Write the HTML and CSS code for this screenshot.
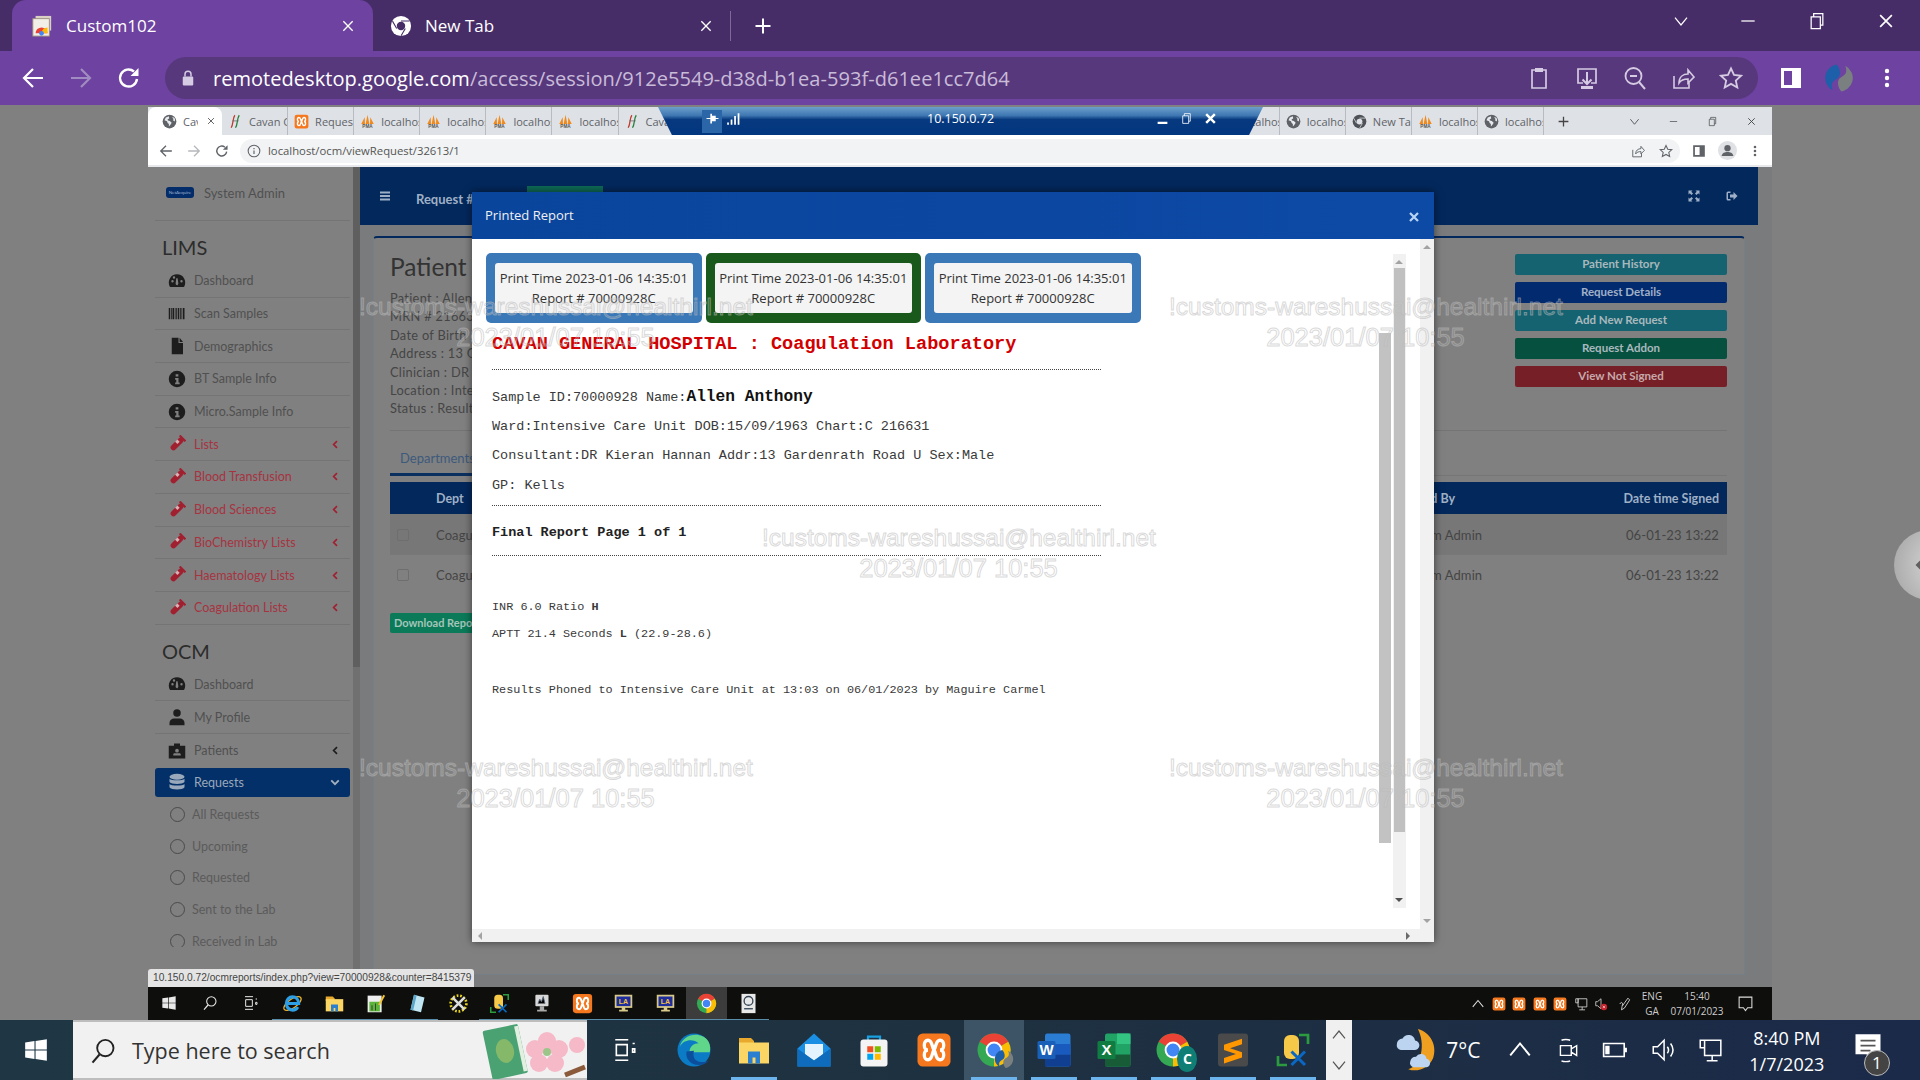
FILE: index.html
```html
<!DOCTYPE html>
<html lang="en">
<head>
    <meta charset="UTF-8">
    <title>Custom102 - Printed Report</title>
    <link rel="stylesheet" href="styles.css">
</head>
<body>
<svg class="defs" width="0" height="0">
    <symbol id="i-win" viewBox="0 0 24 24"><path fill="currentColor" d="M2 5l8.6-1.2v7.7H2zM11.6 3.7L22 2v9.5H11.6zM2 12.5h8.6v7.7L2 19zM11.6 12.5H22V22l-10.4-1.6z"/></symbol>
    <symbol id="i-search" viewBox="0 0 24 24"><circle cx="14" cy="9.5" r="7" fill="none" stroke="currentColor" stroke-width="1.6"/><path d="M9 15L3 22" stroke="currentColor" stroke-width="1.8"/></symbol>
    <symbol id="i-taskview" viewBox="0 0 24 24"><path fill="none" stroke="currentColor" stroke-width="1.5" d="M3 2.5h12M3 21.5h12M4 7h10v10H4zM19 6h2M19 11h2v3h-2z"/></symbol>
    <symbol id="i-chrome" viewBox="0 0 24 24"><circle cx="12" cy="12" r="11" fill="#34a853"/><path fill="#ea4335" d="M12 12L2.47 6.5A11 11 0 0 1 21.53 6.5z"/><path fill="#fbbc05" d="M12 12L21.53 6.5A11 11 0 0 1 12 23z"/><circle cx="12" cy="12" r="5.6" fill="#fff"/><circle cx="12" cy="12" r="4.3" fill="#4285f4"/></symbol>
    <symbol id="i-chrome-mono" viewBox="0 0 24 24"><circle cx="12" cy="12" r="11" fill="currentColor"/><circle cx="12" cy="12" r="4.6" fill="var(--hole)"/><path fill="none" stroke="var(--hole)" stroke-width="1.2" d="M12 6.6h9.3M7.3 14.7L2.7 6.7M16.7 14.7l-4.6 8"/></symbol>
    <symbol id="i-globe" viewBox="0 0 24 24"><circle cx="12" cy="12" r="11" fill="#5f6368"/><path fill="#e8eaed" d="M11 3.5l-5 2.2L4 10l4 1.5 1 3 2 1.5V20l2.5-3 2-3-3-3-3-.5-.5-2 2.5-1.2zM16 5l2.5 3-1 2 3 2 .5-4-2-2.5z"/></symbol>
    <symbol id="i-pma" viewBox="0 0 24 24"><path fill="#f08a1d" d="M12 1l3 15H9zM7.5 5L8 16H2zM16.5 5L22 16h-6z"/><text x="12" y="23" font-size="7.5" font-weight="700" text-anchor="middle" font-family="Liberation Sans" fill="#555">PMA</text></symbol>
    <symbol id="i-cavan" viewBox="0 0 24 24"><path fill="none" stroke="#c03a2b" stroke-width="2" d="M11 2C7 7 9 16 5 22"/><path fill="none" stroke="#23803a" stroke-width="2" d="M18 2c-4 5-2 14-6 20"/><path fill="none" stroke="#666" stroke-width="1.2" d="M7 11h10"/></symbol>
    <symbol id="i-xampp" viewBox="0 0 24 24"><rect x="1" y="1" width="22" height="22" rx="3.5" fill="#f5781e"/><path fill="none" stroke="#fff" stroke-width="2.2" d="M8 5.5c3 0 2.500 4.500 4 6.500 1.500-2 1-6.500 4-6.500 3.300 0 3.300 6.500 0 6.500 3.300 0 3.300 6.500 0 6.500-3 0-2.500-4.500-4-6.500-1.500 2-1 6.500-4 6.500-3.300 0-3.300-6.500 0-6.500-3.300 0-3.300-6.500 0-6.500z"/></symbol>
    <symbol id="i-folder" viewBox="0 0 24 24"><path fill="#e8a92c" d="M2 4h8l2 2v3H2z"/><path fill="#fbd665" d="M2 7h20v14H2z"/><path fill="#2a7fd0" d="M8 13h8v8h-3v-4h-2v4H8z"/></symbol>
    <symbol id="i-edge" viewBox="0 0 24 24"><circle cx="12" cy="12" r="11" fill="#0c7bc5"/><path fill="#5fd68a" d="M2.500 10C4 3 12 0 18 3c4 2 5.500 6 4.500 10.500H9c0-4 3-6 6-6 -3-3-10-3-12.500 2.500z"/><path fill="#0b4f9c" d="M7 13c-1 5 3 9 8 9 3 0 5-1 7-3-4 2-9 1-10-2-.5-1.500-.5-3 0-4.500z"/></symbol>
    <symbol id="i-mail" viewBox="0 0 24 24"><path fill="#1a8fe3" d="M12 1L23 11v12H1V11z"/><path fill="#e4f3fd" d="M6 8h12v7l-6 4-6-4z"/><path fill="#0f6cbd" d="M1 11l11 8 11-8v12H1z"/></symbol>
    <symbol id="i-store" viewBox="0 0 24 24"><path fill="none" stroke="#18a0e0" stroke-width="1.500" d="M8 6V3h8v3"/><rect x="3" y="5" width="18" height="18" rx="2" fill="#f4f4f4"/><rect x="7.500" y="9.500" width="4" height="4" fill="#f25022"/><rect x="12.500" y="9.500" width="4" height="4" fill="#7fba00"/><rect x="7.500" y="14.500" width="4" height="4" fill="#00a4ef"/><rect x="12.500" y="14.500" width="4" height="4" fill="#ffb900"/></symbol>
    <symbol id="i-word" viewBox="0 0 24 24"><rect x="6" y="1" width="17" height="22" rx="1.500" fill="#2b7cd3"/><rect x="6" y="8" width="17" height="7" fill="#185abd"/><rect x="6" y="15" width="17" height="8" fill="#103f91"/><rect x="1" y="6" width="12" height="12" rx="1" fill="#1a5fb8"/><text x="7" y="15.500" font-size="10" font-weight="700" text-anchor="middle" font-family="Liberation Sans" fill="#fff">W</text></symbol>
    <symbol id="i-excel" viewBox="0 0 24 24"><rect x="6" y="1" width="17" height="22" rx="1.500" fill="#21a366"/><rect x="14" y="1" width="9" height="7" fill="#33c481"/><rect x="6" y="15" width="17" height="8" fill="#185c37"/><rect x="1" y="6" width="12" height="12" rx="1" fill="#107c41"/><text x="7" y="15.500" font-size="10" font-weight="700" text-anchor="middle" font-family="Liberation Sans" fill="#fff">X</text></symbol>
    <symbol id="i-sublime" viewBox="0 0 24 24"><rect x="2" y="1" width="20" height="22" rx="2" fill="#4a4a4a"/><path fill="#ff9800" d="M6 8.500l12-4v3.700l-8 2.600 8 2.700v3.500l-12 4v-3.700l8-2.600-8-2.700z"/></symbol>
    <symbol id="i-tools" viewBox="0 0 24 24"><rect x="6" y="2" width="10" height="16" rx="4" fill="#f7c948"/><path fill="none" stroke="#2c9a3e" stroke-width="1.800" d="M2 16v6h6M22 8V2h-6"/><path fill="none" stroke="#0a68c4" stroke-width="2" d="M11 22l9-9M20 22l-9-9"/></symbol>
    <symbol id="i-notepad" viewBox="0 0 24 24"><rect x="3" y="3" width="16" height="19" fill="#eee"/><path fill="#5bb53a" d="M5 10h12v11H5z"/><path fill="#f4c430" d="M15 13l6-11 2 1-6 11z"/><path stroke="#333" d="M8 20v-6M12 20v-8"/></symbol>
    <symbol id="i-sheet" viewBox="0 0 24 24"><path fill="#bfe6f2" d="M8 2l12 3-4 17-12-3z"/><path fill="#5aa5c9" d="M4 19l4-17 3 .8L7 20z"/></symbol>
    <symbol id="i-wrench" viewBox="0 0 24 24"><circle cx="12" cy="12" r="9" fill="none" stroke="#e6d21f" stroke-width="3" stroke-dasharray="2 2"/><path stroke="#ddd" stroke-width="3" d="M5 5l14 14M19 5L5 19"/></symbol>
    <symbol id="i-mon" viewBox="0 0 24 24"><rect x="3" y="3" width="18" height="13" fill="#1d2d9b" stroke="#d8c98a" stroke-width="2"/><path fill="#d8c98a" d="M10 16h4v3h3v2H7v-2h3z"/><text x="12" y="13" font-size="8" font-weight="700" text-anchor="middle" font-family="Liberation Sans" fill="#f0c040">LA</text></symbol>
    <symbol id="i-scope" viewBox="0 0 24 24"><rect x="4" y="1" width="16" height="22" fill="#e8e8e8"/><circle cx="12" cy="9" r="5" fill="none" stroke="#345" stroke-width="1.500"/><path stroke="#345" stroke-width="1.500" d="M7 18h10"/></symbol>
    <symbol id="i-pc" viewBox="0 0 24 24"><rect x="5" y="2" width="15" height="13" rx="1" fill="#d8d8d8"/><path stroke="#567" d="M8 12l2-5 2 3 2-6 2 8"/><path fill="#aaa" d="M10 15h5v4h3v2H7v-2h3z"/></symbol>
    <symbol id="i-monitor" viewBox="0 0 24 24"><path fill="none" stroke="currentColor" stroke-width="1.400" d="M7 3h15v14H7zM3 3h4v7H3zM14 17v5M9 22h10"/></symbol>
    <symbol id="i-speaker" viewBox="0 0 24 24"><path fill="none" stroke="currentColor" stroke-width="1.400" d="M3 9h4l6-6v18l-6-6H3zM16 9c1.500 2 1.500 4 0 6M19 6c3 4 3 8 0 12"/></symbol>
    <symbol id="i-battery" viewBox="0 0 24 24"><path fill="none" stroke="currentColor" stroke-width="1.500" d="M1.500 6h19v12h-19z"/><path fill="currentColor" d="M3 8h4v8H3zM21 10h2v4h-2z"/></symbol>
    <symbol id="i-cam" viewBox="0 0 24 24"><path fill="none" stroke="currentColor" stroke-width="1.300" d="M5 8h10v9H5zM15 11l5-3v9l-5-3M6 3c2-1 6-1 8 0M6 22c2 1 6 1 8 0"/></symbol>
    <symbol id="i-chat" viewBox="0 0 24 24"><path fill="none" stroke="currentColor" stroke-width="1.500" d="M3 3h18v15h-6l-3 4-3-4H3z"/></symbol>
    <symbol id="i-caret-up" viewBox="0 0 24 24"><path fill="none" stroke="currentColor" stroke-width="1.800" d="M3 17l9-11 9 11"/></symbol>
    <symbol id="i-caret-down" viewBox="0 0 24 24"><path fill="none" stroke="currentColor" stroke-width="1.800" d="M3 7l9 11 9-11"/></symbol>
    <symbol id="i-close" viewBox="0 0 24 24"><path fill="none" stroke="currentColor" stroke-width="2" d="M5 5l14 14M19 5L5 19"/></symbol>
    <symbol id="i-close-bold" viewBox="0 0 24 24"><path fill="none" stroke="currentColor" stroke-width="4.500" d="M4 4l16 16M20 4L4 20"/></symbol>
    <symbol id="i-min" viewBox="0 0 24 24"><path stroke="currentColor" stroke-width="1.500" d="M4 12h16"/></symbol>
    <symbol id="i-min-bold" viewBox="0 0 24 24"><path stroke="currentColor" stroke-width="4" d="M3 20h18"/></symbol>
    <symbol id="i-restore" viewBox="0 0 24 24"><path fill="none" stroke="currentColor" stroke-width="1.500" d="M5 7h11v14H5zM8 7V3h11v14h-3"/></symbol>
    <symbol id="i-plus" viewBox="0 0 24 24"><path stroke="currentColor" stroke-width="2.400" d="M12 3v18M3 12h18"/></symbol>
    <symbol id="i-back" viewBox="0 0 24 24"><path fill="none" stroke="currentColor" stroke-width="2.200" d="M22 12H4M12 3l-9 9 9 9"/></symbol>
    <symbol id="i-forward" viewBox="0 0 24 24"><path fill="none" stroke="currentColor" stroke-width="2.200" d="M2 12h18M12 3l9 9-9 9"/></symbol>
    <symbol id="i-reload" viewBox="0 0 24 24"><path fill="none" stroke="currentColor" stroke-width="2.400" d="M20 13a8.500 8.500 0 1 1-3-7.500"/><path fill="currentColor" d="M21.500 2v8h-8z"/></symbol>
    <symbol id="i-lock" viewBox="0 0 24 24"><path fill="none" stroke="currentColor" stroke-width="2" d="M8 10V7a4 4 0 0 1 8 0v3"/><rect x="5" y="10" width="14" height="12" rx="1.500" fill="currentColor"/></symbol>
    <symbol id="i-info" viewBox="0 0 24 24"><circle cx="12" cy="12" r="10" fill="none" stroke="currentColor" stroke-width="1.800"/><path stroke="currentColor" stroke-width="2" d="M12 11v6M12 7v2"/></symbol>
    <symbol id="i-clip" viewBox="0 0 24 24"><path fill="none" stroke="currentColor" stroke-width="1.700" d="M5 4h14v18H5z"/><rect x="8" y="2" width="8" height="4" fill="currentColor"/></symbol>
    <symbol id="i-install" viewBox="0 0 24 24"><path fill="none" stroke="currentColor" stroke-width="1.700" d="M8 17H3V3h18v14h-5"/><path fill="none" stroke="currentColor" stroke-width="2" d="M12 6v12M7.500 13.500L12 18l4.500-4.500"/><rect x="6" y="20" width="12" height="3" fill="currentColor"/></symbol>
    <symbol id="i-zoomout" viewBox="0 0 24 24"><circle cx="10.500" cy="10" r="8" fill="none" stroke="currentColor" stroke-width="1.800"/><path stroke="currentColor" stroke-width="2" d="M7 10h7M16 16l6 7"/></symbol>
    <symbol id="i-share" viewBox="0 0 24 24"><path fill="none" stroke="currentColor" stroke-width="1.600" d="M3 10v12h15v-6M8 17c0-6 4-9 9-9V4l6 7-6 6v-4c-4 0-7 1-9 4z"/></symbol>
    <symbol id="i-star" viewBox="0 0 24 24"><path fill="none" stroke="currentColor" stroke-width="1.800" d="M12 2.500l3 6.500 7 .8-5.200 4.700 1.500 7L12 17.900 5.700 21.500l1.500-7L2 9.800 9 9z"/></symbol>
    <symbol id="i-panel" viewBox="0 0 24 24"><path fill="currentColor" fill-rule="evenodd" d="M2 2h20v20H2zM5 5v14h8V5z"/></symbol>
    <symbol id="i-menu" viewBox="0 0 24 24"><circle cx="12" cy="5" r="2.200" fill="currentColor"/><circle cx="12" cy="12" r="2.200" fill="currentColor"/><circle cx="12" cy="19" r="2.200" fill="currentColor"/></symbol>
    <symbol id="i-profile" viewBox="0 0 24 24"><circle cx="12" cy="12" r="12" fill="#dfe1e5"/><circle cx="12" cy="9" r="4" fill="#5f6368"/><path fill="#5f6368" d="M4.500 19c1-4 4-5 7.500-5s6.500 1 7.500 5z"/></symbol>
    <symbol id="i-swirl" viewBox="0 0 24 24"><path fill="#1d5fa8" d="M12 1a11 11 0 0 0-5 20.800C4 14 10 14 12 11c2-3 0-8-2-9.800z"/><path fill="#7a8080" d="M12 23a11 11 0 0 0 5-20.800c3 7.800-3 7.800-5 10.800-2 3 0 8 2 9.800z"/></symbol>
    <symbol id="i-gauge" viewBox="0 0 24 24"><path fill="currentColor" fill-rule="evenodd" d="M12 3a11 11 0 0 0-9.500 16.500c.3.500.8.500 1.200.500h16.600c.4 0 .9 0 1.200-.500A11 11 0 0 0 12 3zM6 14a1.600 1.600 0 1 1 0-3.200A1.600 1.600 0 0 1 6 14zM8 9a1.600 1.600 0 1 1 0-3.200A1.600 1.600 0 0 1 8 9zm4.800 8.500a2 2 0 0 1-2.600-2.200l.8-7h1.800l1 7zM18 14a1.600 1.600 0 1 1 0-3.200A1.600 1.600 0 0 1 18 14z"/></symbol>
    <symbol id="i-barcode" viewBox="0 0 24 24"><path fill="currentColor" d="M1 4h2v15H1zM4 4h1v15H4zM6 4h2v15H6zM9 4h1v15H9zM11 4h1v15h-1zM13 4h2v15h-2zM16 4h1v15h-1zM18 4h1v15h-1zM20 4h2v15h-2z"/></symbol>
    <symbol id="i-file" viewBox="0 0 24 24"><path fill="currentColor" d="M5 1h9v7h6v15H5zM15.500 1L20 6.500h-4.500z"/></symbol>
    <symbol id="i-infofill" viewBox="0 0 24 24"><path fill="currentColor" fill-rule="evenodd" d="M12 1a11 11 0 1 0 0 22 11 11 0 0 0 0-22zm-1.800 4.500h3.600v3h-3.600zM9.500 10.500H14v6h1.500v2.500h-6v-2.500H11V13H9.500z"/></symbol>
    <symbol id="i-vial" viewBox="0 0 24 24"><g transform="rotate(45 12 12)" fill="currentColor"><rect x="8.200" y="1.500" width="7.600" height="21" rx="3.800"/><rect x="6.500" y="0" width="11" height="3" rx="1"/></g><path fill="#e8e2e2" opacity=".75" d="M12.500 6l3 3-3 3-3-3z"/></symbol>
    <symbol id="i-user" viewBox="0 0 24 24"><circle cx="12" cy="6.500" r="5" fill="currentColor"/><path fill="currentColor" d="M2 23v-3c0-4 3-6 6-6h8c3 0 6 2 6 6v3z"/></symbol>
    <symbol id="i-badge" viewBox="0 0 24 24"><path fill="currentColor" fill-rule="evenodd" d="M1 5h7V2h8v3h7v17H1zM12 9a2.500 2.500 0 1 0 0 5 2.500 2.500 0 0 0 0-5zM7 18h10v-1.500c0-1-1-1.500-2-1.500H9c-1 0-2 .5-2 1.500z"/></symbol>
    <symbol id="i-db" viewBox="0 0 24 24"><ellipse cx="12" cy="5" rx="10" ry="4" fill="currentColor"/><path fill="currentColor" d="M2 7.500c2 3 18 3 20 0V12c-2 3.500-18 3.500-20 0zM2 14.500c2 3 18 3 20 0V19c-2 4-18 4-20 0z"/></symbol>
    <symbol id="i-chev-left" viewBox="0 0 24 24"><path fill="none" stroke="currentColor" stroke-width="4.500" d="M16 3l-9 9 9 9"/></symbol>
    <symbol id="i-chev-down" viewBox="0 0 24 24"><path fill="none" stroke="currentColor" stroke-width="4.500" d="M3 8l9 9 9-9"/></symbol>
    <symbol id="i-bars" viewBox="0 0 24 24"><path fill="currentColor" d="M2 3h20v4H2zM2 10h20v4H2zM2 17h20v4H2z"/></symbol>
    <symbol id="i-expand" viewBox="0 0 24 24"><path fill="currentColor" d="M1 1h8L6.500 3.500 10 7l-3 3-3.500-3.500L1 9zM23 1v8l-2.500-2.500L17 10l-3-3 3.500-3.500L15 1zM1 23v-8l2.500 2.500L7 14l3 3-3.500 3.500L9 23zM23 23h-8l2.500-2.500L14 17l3-3 3.500 3.500L23 15z"/></symbol>
    <symbol id="i-signout" viewBox="0 0 24 24"><path fill="currentColor" d="M9 3H4a3 3 0 0 0-3 3v12a3 3 0 0 0 3 3h5v-3H4V6h5zM15 4l8 8-8 8v-5H8V9h7z"/></symbol>
    <symbol id="i-pin" viewBox="0 0 24 24"><path fill="currentColor" d="M8 3h3v18H8zM11 7h7v10h-7zM1 11h7v2H1zM18 11h5v2h-5z"/></symbol>
    <symbol id="i-signal" viewBox="0 0 24 24"><path fill="currentColor" d="M2 18h3v4H2zM8 13h3v9H8zM14 7h3v15h-3zM20 2h3v20h-3z"/></symbol>
    <symbol id="i-tab-stack" viewBox="0 0 24 24"><rect x="5" y="1" width="17" height="16" fill="#d8d0c4"/><rect x="2" y="4" width="18" height="19" fill="#f2efe9" stroke="#9a8d7c"/><path fill="#ea4335" d="M5 20a6.500 6.500 0 0 1 13 0z"/><path fill="#fbbc05" d="M11.500 20a6.500 6.500 0 0 1 6.500-6.500V20z"/><circle cx="11.500" cy="20" r="2.500" fill="#4285f4"/></symbol>
    <symbol id="i-moon" viewBox="0 0 24 24"><path fill="#f0a020" d="M13 1c7 2 10 9 8 15-2 5-8 8-13 6 7-2 9-13 5-21z"/><path fill="#bcd4ef" d="M2 9a3 3 0 0 1 3-3 3.500 3.500 0 0 1 6.500 1A2.500 2.500 0 0 1 11 12H4a2.500 2.500 0 0 1-2-3zM9 18a3 3 0 0 1 3-2.500 3 3 0 0 1 5.500 1 2.300 2.300 0 0 1 0 4.500H11a2.200 2.200 0 0 1-2-3z"/></symbol>
    <symbol id="i-pen" viewBox="0 0 24 24"><path fill="none" stroke="currentColor" stroke-width="1.500" d="M17 2l3 3-9 14-5 3 1-6zM3 12c4-6 6 0 4 3"/></symbol>
    <symbol id="i-mute" viewBox="0 0 24 24"><path fill="none" stroke="#ccc" stroke-width="1.500" d="M3 8h3l6-5v17l-6-5H3z"/><circle cx="17" cy="17" r="5.500" fill="#c8232c"/><path stroke="#fff" d="M15 15l4 4M19 15l-4 4"/></symbol>
    <symbol id="i-ie" viewBox="0 0 24 24"><ellipse cx="12" cy="12" rx="11.500" ry="5" fill="none" stroke="#e8b22c" stroke-width="1.500" transform="rotate(-35 12 12)"/><path fill="none" stroke="#2d9fe6" stroke-width="3.600" d="M5.500 12h13.500c0-4.500-3-7.500-7-7.500s-7 3.500-7 7.500 3 7.500 7 7.500c3 0 5-1.500 6-3.500"/></symbol>
</svg>

<header class="tab-strip">
    <div class="tab active">
        <svg class="fav"><use href="#i-tab-stack"/></svg>
        <span>Custom102</span>
        <svg class="tab-x"><use href="#i-close"/></svg>
    </div>
    <div class="tab second">
        <svg class="fav"><use href="#i-chrome-mono"/></svg>
        <span>New Tab</span>
        <svg class="tab-x"><use href="#i-close"/></svg>
    </div>
    <div class="tab-sep"></div>
    <svg class="tab-plus"><use href="#i-plus"/></svg>
    <div class="win-controls">
        <svg><use href="#i-caret-down"/></svg>
        <svg><use href="#i-min"/></svg>
        <svg><use href="#i-restore"/></svg>
        <svg><use href="#i-close"/></svg>
    </div>
</header>

<div class="toolbar">
    <span class="tool"><svg><use href="#i-back"/></svg></span>
    <span class="tool faded"><svg><use href="#i-forward"/></svg></span>
    <span class="tool"><svg><use href="#i-reload"/></svg></span>
    <div class="omnibox">
        <svg class="lock"><use href="#i-lock"/></svg>
        <span class="url"><b>remotedesktop.google.com</b>/access/session/912e5549-d38d-b1ea-593f-d61ee1cc7d64</span>
        <span class="tool muted"><svg><use href="#i-clip"/></svg></span>
        <span class="tool muted"><svg><use href="#i-install"/></svg></span>
        <span class="tool muted"><svg><use href="#i-zoomout"/></svg></span>
        <span class="tool muted"><svg><use href="#i-share"/></svg></span>
        <span class="tool muted"><svg><use href="#i-star"/></svg></span>
    </div>
    <span class="tool first-after"><svg><use href="#i-panel"/></svg></span>
    <span class="tool big"><svg><use href="#i-swirl"/></svg></span>
    <span class="tool"><svg><use href="#i-menu"/></svg></span>
</div>

<main class="remote">
    <section class="window">
        <div class="w-tabs">
            <div class="w-tab current"><svg><use href="#i-globe"/></svg><span>Cav</span><svg class="w-x"><use href="#i-close"/></svg></div>
            <div class="w-tab"><svg><use href="#i-cavan"/></svg><span>Cavan General</span></div>
            <div class="w-tab"><svg><use href="#i-xampp"/></svg><span>Request</span></div>
            <div class="w-tab"><svg><use href="#i-pma"/></svg><span>localhost</span></div>
            <div class="w-tab"><svg><use href="#i-pma"/></svg><span>localhost</span></div>
            <div class="w-tab"><svg><use href="#i-pma"/></svg><span>localhost</span></div>
            <div class="w-tab"><svg><use href="#i-pma"/></svg><span>localhost</span></div>
            <div class="w-tab"><svg><use href="#i-cavan"/></svg><span>Cavan General</span></div>
            <div class="w-tab-gap"></div>
            <div class="w-tab"><svg><use href="#i-pma"/></svg><span>localhost</span></div>
            <div class="w-tab"><svg><use href="#i-globe"/></svg><span>localhost</span></div>
            <div class="w-tab ntab"><svg><use href="#i-chrome-mono"/></svg><span>New Tab</span></div>
            <div class="w-tab"><svg><use href="#i-pma"/></svg><span>localhost</span></div>
            <div class="w-tab"><svg><use href="#i-globe"/></svg><span>localhost</span></div>
            <svg class="w-plus"><use href="#i-plus"/></svg>
            <div class="w-controls">
                <svg><use href="#i-caret-down"/></svg>
                <svg><use href="#i-min"/></svg>
                <svg><use href="#i-restore"/></svg>
                <svg><use href="#i-close"/></svg>
            </div>
        </div>

        <div class="w-toolbar">
            <span class="w-tool"><svg><use href="#i-back"/></svg></span>
            <span class="w-tool faded"><svg><use href="#i-forward"/></svg></span>
            <span class="w-tool"><svg><use href="#i-reload"/></svg></span>
            <div class="w-omni">
                <svg class="w-info"><use href="#i-info"/></svg>
                <span class="w-url">localhost/ocm/viewRequest/32613/1</span>
                <span class="w-tool"><svg><use href="#i-share"/></svg></span>
                <span class="w-tool"><svg><use href="#i-star"/></svg></span>
            </div>
            <span class="w-tool panel-tool"><svg><use href="#i-panel"/></svg></span>
            <span class="w-tool"><svg class="w-avatar"><use href="#i-profile"/></svg></span>
            <span class="w-tool"><svg><use href="#i-menu"/></svg></span>
        </div>

        <div class="page">
            <aside class="sidebar">
                <div class="user-panel">
                    <span class="logo">NetAcquire</span>
                    <span>System Admin</span>
                </div>
                <nav class="nav">
                    <h3>LIMS</h3>
                    <a class="nav-item"><svg><use href="#i-gauge"/></svg>Dashboard</a>
                    <a class="nav-item"><svg><use href="#i-barcode"/></svg>Scan Samples</a>
                    <a class="nav-item"><svg><use href="#i-file"/></svg>Demographics</a>
                    <a class="nav-item"><svg><use href="#i-infofill"/></svg>BT Sample Info</a>
                    <a class="nav-item"><svg><use href="#i-infofill"/></svg>Micro.Sample Info</a>
                    <a class="nav-item red"><svg><use href="#i-vial"/></svg>Lists<svg class="arrow"><use href="#i-chev-left"/></svg></a>
                    <a class="nav-item red"><svg><use href="#i-vial"/></svg>Blood Transfusion<svg class="arrow"><use href="#i-chev-left"/></svg></a>
                    <a class="nav-item red"><svg><use href="#i-vial"/></svg>Blood Sciences<svg class="arrow"><use href="#i-chev-left"/></svg></a>
                    <a class="nav-item red"><svg><use href="#i-vial"/></svg>BioChemistry Lists<svg class="arrow"><use href="#i-chev-left"/></svg></a>
                    <a class="nav-item red"><svg><use href="#i-vial"/></svg>Haematology Lists<svg class="arrow"><use href="#i-chev-left"/></svg></a>
                    <a class="nav-item red"><svg><use href="#i-vial"/></svg>Coagulation Lists<svg class="arrow"><use href="#i-chev-left"/></svg></a>
                    <h3>OCM</h3>
                    <a class="nav-item"><svg><use href="#i-gauge"/></svg>Dashboard</a>
                    <a class="nav-item"><svg><use href="#i-user"/></svg>My Profile</a>
                    <a class="nav-item plain"><svg><use href="#i-badge"/></svg>Patients<svg class="arrow"><use href="#i-chev-left"/></svg></a>
                    <a class="nav-item selected"><svg><use href="#i-db"/></svg>Requests<svg class="arrow"><use href="#i-chev-down"/></svg></a>
                    <a class="sub-item"><i></i>All Requests</a>
                    <a class="sub-item"><i></i>Upcoming</a>
                    <a class="sub-item"><i></i>Requested</a>
                    <a class="sub-item"><i></i>Sent to the Lab</a>
                    <a class="sub-item"><i></i>Received in Lab</a>
                </nav>
            </aside>
            <div class="side-track"><div class="side-thumb"></div></div>

            <div class="content">
                <div class="topbar">
                    <svg class="bars"><use href="#i-bars"/></svg>
                    <span class="topbar-title">Request # 32613</span>
                    <span class="topbar-tab"></span>
                    <svg class="topbar-icon"><use href="#i-expand"/></svg>
                    <svg class="topbar-icon"><use href="#i-signout"/></svg>
                </div>
                <div class="card">
                    <div class="card-top">
                        <div class="patient">
                            <h2>Patient Details</h2>
                            <p>Patient : Allen Anthony</p>
                            <p>MRN # 216631</p>
                            <p>Date of Birth : 15/09/1963</p>
                            <p>Address : 13 Gardenrath Road</p>
                            <p>Clinician : DR Kieran Hannan</p>
                            <p>Location : Intensive Care Unit</p>
                            <p>Status : Results</p>
                        </div>
                        <div class="actions">
                            <a class="btn teal">Patient History</a>
                            <a class="btn navy">Request Details</a>
                            <a class="btn teal">Add New Request</a>
                            <a class="btn green">Request Addon</a>
                            <a class="btn crimson">View Not Signed</a>
                        </div>
                    </div>
                    <div class="sub-tabs"><a>Departments</a></div>
                    <div class="row head">
                        <span></span><span>Dept</span><span>Signed By</span><span class="date">Date time Signed</span>
                    </div>
                    <div class="row shade">
                        <span class="check"></span><span>Coagulation</span><span>System Admin</span><span class="date">06-01-23 13:22</span>
                    </div>
                    <div class="row">
                        <span class="check"></span><span>Coagulation</span><span>System Admin</span><span class="date">06-01-23 13:22</span>
                    </div>
                    <a class="download">Download Report</a>
                </div>
            </div>
        </div>

        <footer class="w-taskbar">
            <span class="slot white"><svg><use href="#i-win"/></svg></span>
            <span class="slot white"><svg><use href="#i-search"/></svg></span>
            <span class="slot white"><svg><use href="#i-taskview"/></svg></span>
            <span class="slot open"><svg><use href="#i-ie"/></svg></span>
            <span class="slot open"><svg><use href="#i-folder"/></svg></span>
            <span class="slot open"><svg><use href="#i-notepad"/></svg></span>
            <span class="slot open"><svg><use href="#i-sheet"/></svg></span>
            <span class="slot"><svg><use href="#i-wrench"/></svg></span>
            <span class="slot open"><svg><use href="#i-tools"/></svg></span>
            <span class="slot open"><svg><use href="#i-pc"/></svg></span>
            <span class="slot open"><svg><use href="#i-xampp"/></svg></span>
            <span class="slot open"><svg><use href="#i-mon"/></svg></span>
            <span class="slot open"><svg><use href="#i-mon"/></svg></span>
            <span class="slot on"><svg><use href="#i-chrome"/></svg></span>
            <span class="slot open"><svg><use href="#i-scope"/></svg></span>
            <div class="w-tray">
                <span class="tray white"><svg><use href="#i-caret-up"/></svg></span>
                <span class="tray"><svg><use href="#i-xampp"/></svg></span>
                <span class="tray"><svg><use href="#i-xampp"/></svg></span>
                <span class="tray"><svg><use href="#i-xampp"/></svg></span>
                <span class="tray"><svg><use href="#i-xampp"/></svg></span>
                <span class="tray white"><svg><use href="#i-monitor"/></svg></span>
                <span class="tray"><svg><use href="#i-mute"/></svg></span>
                <span class="tray white pen"><svg><use href="#i-pen"/></svg></span>
                <span class="tray-lang">ENG<br>GA</span>
                <span class="tray-clock">15:40<br>07/01/2023</span>
                <span class="tray white note"><svg><use href="#i-chat"/></svg></span>
            </div>
        </footer>
        <div class="status-tip">10.150.0.72/ocmreports/index.php?view=70000928&amp;counter=8415379</div>
    </section>
    <div class="side-handle"><svg><use href="#i-chev-left"/></svg></div>
</main>

<footer class="taskbar">
    <span class="start"><svg><use href="#i-win"/></svg></span>
    <div class="searchbox">
        <svg class="glass"><use href="#i-search"/></svg>
        <span>Type here to search</span>
        <svg class="doodle" viewBox="0 0 110 56">
            <g transform="rotate(-12 28 28)"><rect x="10" y="4" width="36" height="50" rx="2" fill="#4aa272"/><rect x="42" y="6" width="4" height="46" fill="#e3efe0"/><ellipse cx="28" cy="28" rx="9" ry="12" fill="#86b86a"/></g>
            <g fill="#f6b9c8"><circle cx="70" cy="18" r="9"/><circle cx="82" cy="26" r="9"/><circle cx="78" cy="40" r="9"/><circle cx="62" cy="40" r="9"/><circle cx="58" cy="26" r="9"/><circle cx="100" cy="22" r="8"/></g>
            <circle cx="70" cy="29" r="4" fill="#9cc58a"/>
            <path d="M88 52l20-8" stroke="#8a5a3a" stroke-width="5"/>
        </svg>
    </div>
    <span class="app task"><svg><use href="#i-taskview"/></svg></span>
    <span class="app"><svg><use href="#i-edge"/></svg></span>
    <span class="app run"><svg><use href="#i-folder"/></svg></span>
    <span class="app"><svg><use href="#i-mail"/></svg></span>
    <span class="app"><svg><use href="#i-store"/></svg></span>
    <span class="app"><svg><use href="#i-xampp"/></svg></span>
    <span class="app run hot"><svg><use href="#i-chrome"/></svg><svg class="app-badge"><use href="#i-swirl"/></svg></span>
    <span class="app run"><svg><use href="#i-word"/></svg></span>
    <span class="app run"><svg><use href="#i-excel"/></svg></span>
    <span class="app run"><svg><use href="#i-chrome"/></svg><b class="c-badge">C</b></span>
    <span class="app run"><svg><use href="#i-sublime"/></svg></span>
    <span class="app run"><svg><use href="#i-tools"/></svg></span>
    <div class="pager"><svg><use href="#i-caret-up"/></svg><svg><use href="#i-caret-down"/></svg></div>
    <span class="weather"><svg><use href="#i-moon"/></svg></span>
    <span class="temp">7°C</span>
    <span class="sys"><svg><use href="#i-caret-up"/></svg></span>
    <span class="sys"><svg><use href="#i-cam"/></svg></span>
    <span class="sys"><svg><use href="#i-battery"/></svg></span>
    <span class="sys"><svg><use href="#i-speaker"/></svg></span>
    <span class="sys"><svg><use href="#i-monitor"/></svg></span>
    <span class="clock">8:40 PM<br>1/7/2023</span>
    <span class="notify"><svg viewBox="0 0 24 24"><path fill="#fff" d="M2 1h20v16h-8l-3 5v-5H2z"/><path stroke="#555" stroke-width="1.400" d="M6 6h12M6 10h12M6 14h8"/></svg><b>1</b></span>
</footer>

<!-- over everything: remote bar, dialog, watermarks -->
<div class="rdp-bar">
    <span class="rdp-pin"><svg><use href="#i-pin"/></svg></span>
    <svg class="rdp-signal"><use href="#i-signal"/></svg>
    <span class="rdp-host">10.150.0.72</span>
    <svg class="rdp-btn rdp-first"><use href="#i-min-bold"/></svg>
    <svg class="rdp-btn"><use href="#i-restore"/></svg>
    <svg class="rdp-btn"><use href="#i-close-bold"/></svg>
</div>

<div class="modal">
    <div class="modal-head">
        <span>Printed Report</span>
        <svg><use href="#i-close-bold"/></svg>
    </div>
    <div class="modal-main">
        <div class="modal-body">
            <div class="report-tabs">
                <div class="report-tab"><div>Print Time 2023-01-06 14:35:01<br>Report # 70000928C</div></div>
                <div class="report-tab live"><div>Print Time 2023-01-06 14:35:01<br>Report # 70000928C</div></div>
                <div class="report-tab"><div>Print Time 2023-01-06 14:35:01<br>Report # 70000928C</div></div>
            </div>
            <div class="report">
                <p class="r-title">CAVAN GENERAL HOSPITAL : Coagulation Laboratory</p>
                <hr>
                <p>Sample ID:70000928 Name:<b class="r-name">Allen Anthony</b></p>
                <p>Ward:Intensive Care Unit DOB:15/09/1963 Chart:C 216631</p>
                <p>Consultant:DR Kieran Hannan Addr:13 Gardenrath Road U Sex:Male</p>
                <p>GP: Kells</p>
                <hr>
                <p class="r-final"><b>Final Report Page 1 of 1</b></p>
                <hr>
                <p class="small first">INR 6.0 Ratio <b>H</b></p>
                <p class="small">APTT 21.4 Seconds <b>L</b> (22.9-28.6)</p>
                <p class="small phoned">Results Phoned to Intensive Care Unit at 13:03 on 06/01/2023 by Maguire Carmel</p>
            </div>
            <div class="ghost-bar"><div></div></div>
            <div class="inner-bar"><em class="up"></em><div></div><em class="down"></em></div>
        </div>
        <div class="outer-bar"><em class="up"></em><em class="down"></em></div>
    </div>
    <div class="h-bar"><em class="lf"></em><em class="rt"></em></div>
</div>

<div class="wm wm-a">!customs-wareshussai@healthirl.net<br><span>2023/01/07 10:55</span></div>
<div class="wm wm-b">!customs-wareshussai@healthirl.net<br><span>2023/01/07 10:55</span></div>
<div class="wm wm-c">!customs-wareshussai@healthirl.net<br><span>2023/01/07 10:55</span></div>
<div class="wm wm-d">!customs-wareshussai@healthirl.net<br><span>2023/01/07 10:55</span></div>
<div class="wm wm-e">!customs-wareshussai@healthirl.net<br><span>2023/01/07 10:55</span></div>
</body>
</html>
```

FILE: styles.css
```css
* {
    box-sizing: border-box;
}
html, body {
    margin: 0;
    padding: 0;
}
body {
    position: relative;
    width: 1920px;
    height: 1080px;
    overflow: hidden;
    display: flex;
    flex-direction: column;
    font-family: "Open Sans", "Liberation Sans", sans-serif;
    background: #808080;
}
.defs {
    position: absolute;
}
svg {
    display: block;
    flex-shrink: 0;
}
h2, h3, p {
    margin: 0;
    font-weight: 400;
}

/* outer chrome */
.tab-strip {
    display: flex;
    align-items: center;
    height: 51px;
    padding-left: 12px;
    background: #472d68;
    color: #fff;
    --hole: #472d68;
}
.tab {
    display: flex;
    align-items: center;
    height: 51px;
    font-size: 17px;
}
.tab.active {
    width: 361px;
    padding: 0 13px 0 19px;
    background: #6e42a0;
    border-radius: 14px 14px 0 0;
}
.tab.second {
    width: 347px;
    padding: 0 2px 0 17px;
}
.fav {
    width: 22px;
    height: 22px;
    margin-right: 13px;
}
.tab-x {
    width: 16px;
    height: 16px;
    margin: 0 4px 0 auto;
}
.tab-sep {
    width: 1px;
    height: 30px;
    margin-left: 10px;
    background: #7d6a96;
}
.tab-plus {
    width: 20px;
    height: 20px;
    margin-left: 22px;
}
.win-controls {
    display: flex;
    align-items: center;
    gap: 49px;
    margin-left: auto;
    padding: 0 24px 9px 0;
}
.win-controls svg {
    width: 20px;
    height: 20px;
}
.win-controls svg:nth-child(1) {
    width: 16px;
    height: 16px;
}

.toolbar {
    display: flex;
    align-items: center;
    height: 54px;
    padding: 0 9px;
    background: #6e42a0;
    color: #fff;
}
.tool {
    display: flex;
    align-items: center;
    justify-content: center;
    width: 48px;
    height: 40px;
}
.tool svg {
    width: 24px;
    height: 24px;
}
.tool.faded {
    color: #a08cc0;
}
.tool.muted {
    color: #d5cbe2;
}
.tool.big svg {
    width: 30px;
    height: 30px;
}
.first-after {
    margin-left: 9px;
}
.omnibox {
    display: flex;
    align-items: center;
    width: 1593px;
    height: 42px;
    margin-left: 12px;
    padding-right: 3px;
    background: #57387c;
    border-radius: 21px;
}
.lock {
    width: 18px;
    height: 18px;
    margin-left: 14px;
    color: #d5cbe2;
}
.url {
    flex: 1;
    margin-left: 16px;
    font-size: 20px;
    color: #c9bcd9;
    letter-spacing: 0.04px;
}
.url b {
    font-weight: 400;
    color: #fff;
}

/* remote session */
.remote {
    position: relative;
    flex: 1;
    min-height: 0;
    padding: 2px 148px 0;
    background: #808080;
}
.window {
    position: relative;
    display: flex;
    flex-direction: column;
    height: 100%;
    background: #808080;
    --hole: #dee1e6;
}
.w-tabs {
    display: flex;
    align-items: center;
    height: 28px;
    background: #dee1e6;
    font-size: 11px;
    color: #5f6368;
}
.w-tab {
    display: flex;
    align-items: center;
    gap: 6px;
    width: 66.1px;
    height: 28px;
    padding: 0 6px;
    overflow: hidden;
    white-space: nowrap;
    border-right: 1px solid #b8bcc2;
}
.w-tab svg {
    width: 15px;
    height: 15px;
}
.w-tab.current {
    width: 74px;
    padding-left: 14px;
    background: #fff;
    border-right: 0;
    border-radius: 8px 8px 0 0;
}
.w-tab.current span {
    width: 15px;
    overflow: hidden;
}
.ntab svg {
    color: #4f5358;
}
.w-x {
    width: 10px !important;
    height: 10px !important;
    color: #444;
    margin-left: 2px;
}
.w-tab-gap {
    width: 529px;
}
.w-plus {
    width: 13px;
    height: 13px;
    margin-left: 13px;
    color: #444;
}
.w-controls {
    display: flex;
    align-items: center;
    gap: 28px;
    margin-left: auto;
    padding-right: 15px;
    color: #444;
}
.w-controls svg {
    width: 11px;
    height: 11px;
}
.w-toolbar {
    display: flex;
    align-items: center;
    height: 32px;
    padding: 1px 0 0 4px;
    background: #fff;
    border-bottom: 2px solid #e6e8eb;
    color: #5f6368;
}
.w-tool {
    display: flex;
    align-items: center;
    justify-content: center;
    width: 28px;
    height: 24px;
}
.w-tool svg {
    width: 14px;
    height: 14px;
}
.w-tool.faded {
    color: #b5b8bc;
}
.w-tool svg.w-avatar {
    width: 19px;
    height: 19px;
}
.panel-tool {
    margin-left: 5px;
}
.w-omni {
    display: flex;
    align-items: center;
    width: 1440px;
    height: 24px;
    margin-left: 4px;
    background: #f1f3f4;
    border-radius: 12px;
}
.w-info {
    width: 14px;
    height: 14px;
    margin-left: 7px;
}
.w-url {
    flex: 1;
    margin-left: 7px;
    font-size: 11.300px;
    color: #555;
}

/* app under the dialog backdrop */
.page {
    display: flex;
    flex: 1;
    min-height: 0;
    font-family: Lato, "Open Sans", sans-serif;
}
.sidebar {
    width: 205px;
    padding-left: 7px;
    background: #808080;
    color: #505050;
}
.user-panel {
    display: flex;
    align-items: center;
    gap: 10px;
    width: 195px;
    height: 54px;
    padding: 0 0 2px 11px;
    font-size: 13px;
    border-bottom: 1px solid #747474;
}
.logo {
    width: 28px;
    height: 11px;
    background: #032c6a;
    border-radius: 3px;
    font-size: 4.500px;
    line-height: 11px;
    text-align: center;
    color: #9fb2cf;
}
.nav {
    height: 726px;
    overflow: hidden;
}
.nav h3 {
    height: 44px;
    padding: 12px 0 0 7px;
    font-size: 20px;
    line-height: 28px;
    color: #2c2c2c;
}
.nav-item {
    display: flex;
    align-items: center;
    width: 195px;
    height: 32.700px;
    padding: 0 10px 0 13px;
    font-size: 12.500px;
    border-bottom: 1px solid #747474;
}
.nav-item svg {
    width: 18px;
    height: 18px;
    margin-right: 8px;
    color: #1d1d1d;
}
.nav-item.red {
    color: #a73340;
}
.nav-item.red svg {
    color: #a02030;
}
.nav-item svg.arrow {
    width: 9px;
    height: 9px;
    margin: 0 0 0 auto;
}
.nav-item.plain {
    height: 33.700px;
    border-bottom: 0;
}
.nav-item.selected {
    height: 29px;
    background: #033068;
    color: #9aa8bb;
    border: 0;
    border-radius: 3px;
}
.nav-item.selected svg {
    color: #9aa8bb;
}
.nav-item.selected svg.arrow {
    width: 10px;
    height: 10px;
    color: #a4afbf;
}
.sub-item {
    display: flex;
    align-items: center;
    gap: 7px;
    height: 31.700px;
    padding-left: 15px;
    font-size: 12.500px;
    color: #5b5b5b;
}
.selected + .sub-item {
    margin-top: 2px;
}
.sub-item i {
    width: 15px;
    height: 15px;
    border: 1.500px solid #4a4a4a;
    border-radius: 50%;
}
.side-track {
    width: 7px;
    background: #707070;
}
.side-thumb {
    height: 500px;
    background: #5f5f5f;
}

.content {
    flex: 1;
    min-width: 0;
    padding-right: 14px;
    background: #797b7d;
}
.topbar {
    display: flex;
    align-items: center;
    height: 58px;
    padding: 0 20px 0 19px;
    background: #03285c;
    color: #9fb0c6;
}
.bars {
    width: 12px;
    height: 12px;
    margin-right: 25px;
}
.topbar-title {
    margin-top: 6px;
    font-size: 13px;
    font-weight: 700;
}
.topbar-tab {
    width: 76px;
    height: 6px;
    margin: -14px auto 0 12px;
    background: #0e6a55;
}
.topbar-icon {
    width: 12px;
    height: 12px;
    margin-left: 26px;
}
.card {
    margin: 11px 0 0 13px;
    width: 1372px;
    height: 739px;
    padding: 0 17px 0 16px;
    background: #808080;
    border: 1px solid #767e86;
    border-top: 2px solid #03285c;
    border-radius: 4px 4px 0 0;
    color: #454545;
}
.card-top {
    display: flex;
    justify-content: space-between;
    height: 193px;
    padding-top: 16px;
    border-bottom: 1px solid #747474;
}
.patient {
    margin-top: -2px;
}
.patient h2 {
    font-size: 24.500px;
    line-height: 30px;
    margin-bottom: 7px;
    color: #333;
}
.patient p {
    font-size: 12.800px;
    line-height: 18.400px;
    letter-spacing: 0.3px;
}
.actions {
    display: flex;
    flex-direction: column;
    gap: 7px;
    width: 212px;
}
.btn {
    height: 21px;
    border-radius: 2px;
    font-size: 11.500px;
    font-weight: 700;
    line-height: 20px;
    text-align: center;
    color: #a9b8bd;
}
.btn.teal {
    background: #156270;
}
.btn.navy {
    background: #022a6e;
    color: #a0b0c8;
}
.btn.green {
    background: #05503f;
}
.btn.crimson {
    background: #761f26;
    color: #c6a9ab;
}
.sub-tabs {
    height: 45px;
    padding-top: 18px;
    border-bottom: 1px solid #767676;
    font-size: 13px;
    line-height: 18px;
    color: #3d5a7c;
}
.sub-tabs a {
    display: inline-block;
    height: 27px;
    padding-left: 10px;
    border-bottom: 3px solid #0a3060;
    width: 100px;
}
.row {
    display: grid;
    grid-template-columns: 46px 964px 1fr auto;
    align-items: center;
    height: 39.500px;
    padding-top: 1px;
    font-size: 13px;
    letter-spacing: 0.1px;
}
.row.head {
    height: 32px;
    margin-top: 6px;
    padding-top: 0;
    background: #03285c;
    font-size: 12.500px;
    font-weight: 700;
    letter-spacing: 0;
    color: #9fb0c6;
}
.row.shade {
    height: 41px;
    background: #777;
    border-bottom: 1px solid #787878;
}
.date {
    padding-right: 8px;
    text-align: right;
}
.check {
    width: 12px;
    height: 12px;
    margin-left: 7px;
    border: 1px solid #6e6e6e;
    border-radius: 2px;
}
.download {
    display: block;
    width: 110px;
    height: 20px;
    margin-top: 18px;
    padding-left: 4px;
    background: #0a7a58;
    border-radius: 2px;
    font-size: 11px;
    font-weight: 700;
    line-height: 19px;
    color: #a5c5ba;
}

.w-taskbar {
    display: flex;
    height: 33px;
    background: #0e0e0c;
}
.slot {
    display: flex;
    align-items: center;
    justify-content: center;
    width: 41.400px;
    height: 33px;
    border-bottom: 1px solid transparent;
}
.slot svg {
    width: 21px;
    height: 21px;
}
.slot.white svg {
    width: 16px;
    height: 16px;
    color: #e8e8e8;
}
.slot.open {
    border-bottom-color: #5a8cac;
}
.slot.on {
    background: #3c3c3c;
    border-bottom-color: #5a8cac;
}
.w-tray {
    display: flex;
    align-items: center;
    margin-left: auto;
    padding-right: 7px;
    font-size: 10px;
    color: #ccc;
}
.tray {
    display: flex;
    align-items: center;
    justify-content: center;
    width: 20.500px;
}
.tray svg {
    width: 14px;
    height: 14px;
}
.tray.white {
    color: #ddd;
}
.tray.pen {
    margin-left: 3px;
}
.tray.note {
    width: 40px;
}
.tray.note svg {
    width: 17px;
    height: 17px;
}
.tray-lang {
    width: 34px;
    line-height: 15px;
    text-align: center;
}
.tray-clock {
    width: 56px;
    line-height: 15px;
    text-align: center;
}
.status-tip {
    position: absolute;
    left: 0;
    bottom: 33px;
    width: 326px;
    height: 18px;
    padding-left: 5px;
    background: #e4e4e4;
    border-radius: 3px 3px 0 0;
    font-family: "Liberation Sans", sans-serif;
    font-size: 10.200px;
    line-height: 18px;
    white-space: nowrap;
    color: #444;
}
.side-handle {
    position: absolute;
    right: -44px;
    top: 425px;
    display: flex;
    align-items: center;
    width: 70px;
    height: 70px;
    padding-left: 18px;
    background: radial-gradient(circle at 70% 50%, #dcdcdc, #a2a2a2);
    border-radius: 50%;
    color: #606060;
}
.side-handle svg {
    width: 22px;
    height: 28px;
}

/* windows taskbar */
.taskbar {
    display: flex;
    align-items: stretch;
    height: 60px;
    background: linear-gradient(90deg, #1f3744, #1e3140 50%, #1b2a49);
    color: #fff;
}
.start {
    display: flex;
    align-items: center;
    justify-content: center;
    width: 73px;
    padding-right: 2px;
}
.start svg {
    width: 26px;
    height: 26px;
}
.searchbox {
    display: flex;
    align-items: center;
    width: 514px;
    padding: 1px 0 0 16px;
    background: #f1f1f1;
    border-top: 2px solid #bdbdbd;
    border-bottom: 2px solid #bdbdbd;
    font-size: 21.500px;
    color: #333;
}
.glass {
    width: 28px;
    height: 28px;
    margin-right: 15px;
    color: #222;
}
.doodle {
    width: 110px;
    height: 56px;
    margin-left: auto;
}
.app {
    position: relative;
    display: flex;
    align-items: center;
    justify-content: center;
    width: 59.950px;
}
.app svg {
    width: 36px;
    height: 36px;
}
.app.task {
    width: 60px;
    margin: 0 9px 0 8px;
}
.app.task svg {
    width: 26px;
    height: 26px;
}
.app.run::after {
    content: "";
    position: absolute;
    left: 7px;
    right: 7px;
    bottom: 0;
    height: 3px;
    background: #6cb4ee;
}
.app.hot {
    background: #3d5466;
}
.app svg.app-badge {
    position: absolute;
    right: 10px;
    bottom: 11px;
    width: 20px;
    height: 20px;
}
.c-badge {
    position: absolute;
    right: 6px;
    bottom: 8px;
    width: 20px;
    height: 26px;
    background: #0f7f76;
    border-radius: 50%;
    font-size: 14px;
    line-height: 26px;
    text-align: center;
}
.pager {
    display: flex;
    flex-direction: column;
    justify-content: space-around;
    align-items: center;
    width: 26px;
    margin-left: 3px;
    background: #f0f0f0;
    color: #555;
}
.pager svg {
    width: 16px;
    height: 16px;
}
.weather {
    display: flex;
    align-items: center;
    width: 46px;
    margin-left: 41px;
}
.weather svg {
    width: 46px;
    height: 46px;
}
.temp {
    width: 44px;
    margin-left: 7px;
    font-size: 21px;
    line-height: 60px;
}
.sys {
    display: flex;
    align-items: center;
    justify-content: center;
    width: 48px;
}
.temp + .sys {
    margin-left: 6px;
}
.sys:nth-of-type(n+4) {
    width: 47.500px;
}
.sys svg {
    width: 26px;
    height: 26px;
}
.clock {
    width: 100px;
    margin: 0 1px 0 3px;
    padding-top: 5px;
    font-size: 18px;
    line-height: 26px;
    text-align: center;
}
.notify {
    position: relative;
    display: flex;
    align-items: center;
    justify-content: center;
    width: 60px;
}
.notify svg {
    width: 30px;
    height: 30px;
    margin-top: -4px;
}
.notify b {
    position: absolute;
    right: 8px;
    bottom: 4px;
    width: 26px;
    height: 26px;
    background: #444;
    border: 1px solid #bbb;
    border-radius: 50%;
    font-size: 17px;
    font-weight: 400;
    line-height: 24px;
    text-align: center;
}

/* overlays */
.rdp-bar {
    position: absolute;
    left: 658px;
    top: 107px;
    display: flex;
    align-items: center;
    width: 605px;
    height: 28px;
    padding: 0 46px 5px 44px;
    background: linear-gradient(#6d9ecb, #3f78b2 30%, #06397f 45%, #02367f);
    clip-path: polygon(0 0, 100% 0, 97.700% 100%, 2.300% 100%);
    color: #fff;
    font-size: 12px;
}
.rdp-pin {
    display: flex;
    align-items: center;
    justify-content: center;
    width: 20px;
    height: 23px;
    margin-bottom: -5px;
    padding-bottom: 5px;
    background: #2b66a8;
}
.rdp-pin svg {
    width: 13px;
    height: 13px;
}
.rdp-signal {
    width: 14px;
    height: 14px;
    margin-left: 4px;
}
.rdp-host {
    margin-left: 187px;
    font-size: 12.500px;
}
.rdp-btn {
    width: 13px;
    height: 13px;
    margin-left: 11px;
}
.rdp-first {
    margin-left: auto;
}
.modal {
    position: absolute;
    left: 472px;
    top: 192px;
    display: flex;
    flex-direction: column;
    width: 962px;
    height: 750px;
    background: #fff;
    box-shadow: 0 0 8px rgba(0, 0, 0, 0.55);
}
.modal-head {
    display: flex;
    align-items: center;
    justify-content: space-between;
    height: 47px;
    padding: 0 14px 2px 13px;
    background: linear-gradient(90deg, #0a459c, #0d4aa6);
    color: #f0f0f0;
    font-size: 13px;
}
.modal-head svg {
    width: 12px;
    height: 12px;
    margin-top: 4px;
    color: #b9d4f3;
}
.modal-main {
    display: flex;
    flex: 1;
    min-height: 0;
}
.modal-body {
    position: relative;
    flex: 1;
    padding: 14px 0 0 14px;
}
.report-tabs {
    display: flex;
    gap: 4px;
}
.report-tab {
    width: 215.500px;
    height: 70px;
    padding: 10px 9px;
    background: #3a78b8;
    border-radius: 5px;
}
.report-tab.live {
    background: #195a1c;
}
.report-tab div {
    height: 50px;
    padding-top: 5px;
    background: #f4f4f4;
    border-radius: 3px;
    font-size: 13px;
    line-height: 20px;
    text-align: center;
    color: #333;
}
.report {
    padding: 12px 0 0 6px;
    font-family: "Liberation Mono", "Courier New", monospace;
    font-size: 13.500px;
    color: #3a3a3a;
}
.report p {
    height: 20px;
    margin-bottom: 9.500px;
    line-height: 20px;
    white-space: nowrap;
}
.report hr {
    width: 609px;
    height: 0;
    margin: 7.500px 0 17px 0;
    border: 0;
    border-top: 1px dotted #444;
}
.report p.r-title {
    margin-bottom: 14px;
    font-size: 18.600px;
    font-weight: 700;
    color: #d20000;
}
.r-title + hr {
    margin: 0 0 17px;
}
.r-name {
    font-size: 16.200px;
    color: #111;
}
.report p.r-final {
    color: #222;
    margin-bottom: 12px;
}
.report p.small {
    margin-bottom: 7px;
    font-size: 11.840px;
}
.report p.first {
    margin-top: 41px;
}
.report p.phoned {
    margin-top: 36px;
}
.ghost-bar {
    position: absolute;
    left: 907px;
    top: 94px;
    width: 12px;
    height: 510px;
    background: #c2c2c2;
}
.inner-bar {
    position: absolute;
    left: 921px;
    top: 15px;
    display: flex;
    flex-direction: column;
    align-items: center;
    width: 13px;
    height: 654px;
    padding-top: 14px;
    background: #f1f1f1;
}
.inner-bar div {
    width: 11px;
    height: 564px;
    background: #c0c0c0;
}
.outer-bar {
    position: relative;
    width: 14px;
    background: #f1f1f1;
}
.h-bar {
    position: relative;
    height: 13px;
    background: #f1f1f1;
}
.up, .down, .lf, .rt {
    position: absolute;
    width: 0;
    height: 0;
    border: 4px solid transparent;
}
.up {
    left: 3px;
    top: 2px;
    border-bottom-color: #a3a3a3;
}
.down {
    left: 3px;
    bottom: 2px;
    border-top-color: #505050;
}
.outer-bar .down {
    border-top-color: #a3a3a3;
}
.inner-bar .up {
    left: 2px;
}
.inner-bar .down {
    left: 2px;
}
.lf {
    left: 2px;
    top: 3px;
    border-right-color: #a3a3a3;
}
.rt {
    right: 20px;
    top: 3px;
    border-left-color: #6a6a6a;
}
.wm {
    position: absolute;
    width: 393px;
    font-family: "Liberation Sans", sans-serif;
    font-size: 24.500px;
    line-height: 30px;
    text-align: center;
    white-space: nowrap;
    color: rgba(255, 255, 255, 0.1);
    -webkit-text-stroke: 1px rgba(185, 185, 185, 0.55);
    pointer-events: none;
}
.wm span {
    font-size: 25.500px;
}
.wm-a {
    left: 359px;
    top: 292px;
}
.wm-b {
    left: 1169px;
    top: 292px;
}
.wm-c {
    left: 762px;
    top: 523px;
}
.wm-d {
    left: 359px;
    top: 753px;
}
.wm-e {
    left: 1169px;
    top: 753px;
}
```
